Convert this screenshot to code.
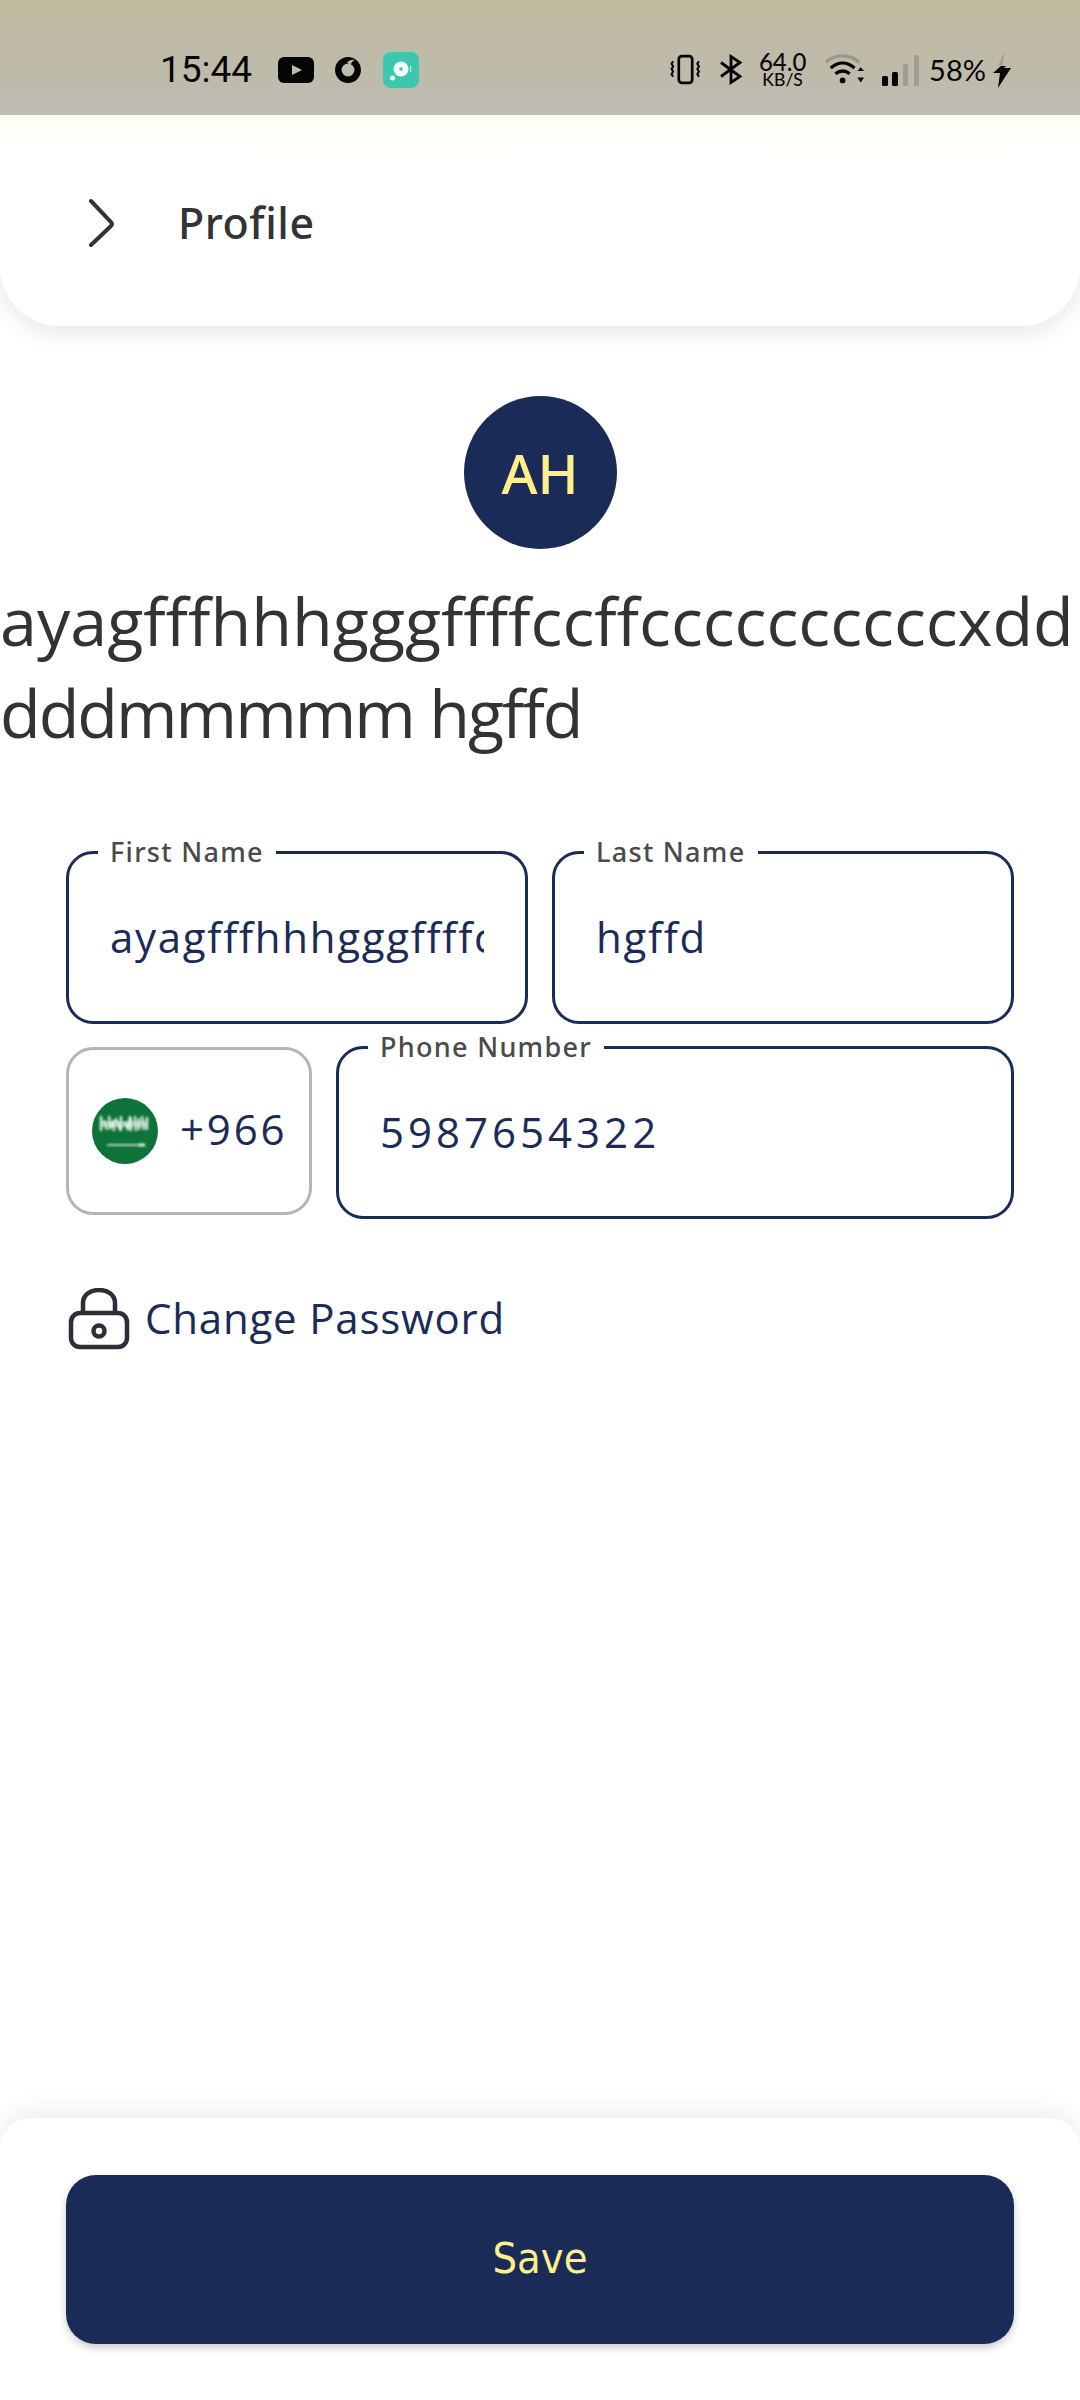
<div class="page">
  <div class="status">
    <div class="status-left">
      <span class="time">15:44</span>
      <svg class="yt" viewBox="0 0 36 26"><rect width="36" height="26" rx="6" fill="#050505"/><path d="M14 8l10 5-10 5z" fill="#c0bca8"/></svg>
      <svg class="voda" viewBox="0 0 26 26"><circle cx="13" cy="13" r="9.700" fill="none" stroke="#050505" stroke-width="6.500"/><path d="M12 6c2-3 6-4 8-2.500-2 0-3.500 1.500-4 4-1.500-1-3-1-4-1.500z" fill="#bdb9a6"/></svg>
      <svg class="app" viewBox="0 0 36 36"><rect width="36" height="36" rx="8" fill="#3cc7ae"/><circle cx="18" cy="17" r="7.500" fill="#f2fbf8"/><circle cx="18" cy="17" r="1.800" fill="#3cc7ae"/><circle cx="9.500" cy="26" r="2.500" fill="#f2fbf8"/><rect x="27" y="14" width="1.200" height="6" fill="#bfeee4"/></svg>
    </div>
    <div class="status-right">
      <svg class="vib" viewBox="0 0 32 30" fill="none" stroke="#050505"><rect x="9.500" y="2" width="13" height="26" rx="3" stroke-width="2.600"/><path d="M4 7l-1.500 2.500L4 12l-1.500 2.500L4 17l-1.500 2.500L4 22M29 7l-1.500 2.500L29 12l-1.500 2.500L29 17l-1.500 2.500L29 22" stroke-width="2"/></svg>
      <svg class="bt" viewBox="0 0 24 30" fill="none" stroke="#050505" stroke-width="2.800"><path d="M2 8l19 14-9 6V2l9 6L2 22"/></svg>
      <div class="speed"><span class="sp-num">64.0</span><span class="sp-unit">KB/S</span></div>
      <svg class="wifi" viewBox="0 0 42 32" fill="none"><path d="M1 8C10-1 26-1 36 8" stroke="#999789" stroke-width="3.500"/><path d="M6 14c8-7 17-7 25 0" stroke="#050505" stroke-width="3.500"/><path d="M11 20c5-4 10-4 15 0" stroke="#050505" stroke-width="3.500"/><circle cx="18.500" cy="27" r="3" fill="#050505"/><path d="M34 17l3.500-4 3.500 4zM34 24l3.500 5 3.500-5z" fill="#050505"/></svg>
      <svg class="signal" viewBox="0 0 38 32"><rect x="1" y="22" width="6" height="10" rx="1.500" fill="#050505"/><rect x="11" y="18" width="6" height="14" rx="1.500" fill="#050505"/><rect x="22" y="10" width="5" height="22" rx="1.500" fill="#a09e90"/><rect x="33" y="1" width="5" height="31" rx="1.500" fill="#a09e90"/></svg>
      <span class="batt">58%</span>
      <svg class="bolt" viewBox="0 0 20 36"><path d="M12 0L6 14h5z" fill="#a5a393"/><path d="M9 14L1 21h7L6 36l13-20h-7l2-2z" fill="#050505"/></svg>
    </div>
  </div>

  <header class="bar">
    <svg class="chev" viewBox="0 0 28 52" fill="none"><path d="M4 3l20 21a3 3 0 0 1 0 4L4 47" stroke="#333" stroke-width="4" stroke-linecap="round"/></svg>
    <h1>Profile</h1>
  </header>

  <main>
    <div class="avatar">AH</div>
    <h2>ayagfffhhhgggffffccffccccccccccxdddddmmmmm hgffd</h2>

    <form>
      <div class="row">
        <fieldset class="field half">
          <legend>First Name</legend>
          <div class="value">ayagfffhhhgggffffccffccccccccccxdddddmmmmm</div>
        </fieldset>
        <fieldset class="field half">
          <legend>Last Name</legend>
          <div class="value">hgffd</div>
        </fieldset>
      </div>
      <div class="row phone">
        <div class="code">
          <svg class="flag" viewBox="0 0 66 66">
            <defs>
              <clipPath id="c"><circle cx="33" cy="33" r="33"/></clipPath>
              <filter id="b" x="-10%" y="-10%" width="120%" height="120%"><feGaussianBlur stdDeviation="0.900"/></filter>
            </defs>
            <g clip-path="url(#c)">
              <rect width="66" height="66" fill="#0e7339"/>
              <g filter="url(#b)" stroke="#e4efe6" stroke-width="2.200" fill="none">
                <path d="M9 18v15M12 22l3 10M17 18l1 13 4-9v11M24 20l4 12M29 18v15M33 24l3 8 2-14M39 20v13M43 18l1 15M47 20v12M50 18l2 14M55 19v13"/>
                <path d="M9 26h46" stroke-width="6" opacity=".6"/>
                <path d="M15 47h35" stroke-width="1.600"/>
                <path d="M47 47h6" stroke-width="3"/>
              </g>
            </g>
          </svg>
          <span class="dial">+966</span>
        </div>
        <fieldset class="field grow">
          <legend>Phone Number</legend>
          <div class="value num">5987654322</div>
        </fieldset>
      </div>
    </form>

    <div class="pw">
      <svg class="lock" viewBox="0 0 62 62" fill="none" stroke="#2b2f38" stroke-width="4.500"><path d="M15 25V15C15 7 22 2 31 2s16 5 16 13v10"/><rect x="3" y="25" width="56" height="34" rx="9"/><circle cx="31" cy="43" r="5.500"/></svg>
      <span class="pw-text">Change Password</span>
    </div>
  </main>

  <footer>
    <button type="button">Save</button>
  </footer>
</div>

<style>
  :global(body) { margin: 0; background: #fff; }
  .page {
    width: 1080px;
    height: 2400px;
    display: flex;
    flex-direction: column;
    overflow: hidden;
    font-family: "Open Sans", "Noto Sans", sans-serif;
    background: #fff;
  }
  .status {
    height: 115px;
    flex: none;
    box-sizing: border-box;
    padding: 0 68px 0 160px;
    display: flex;
    align-items: center;
    justify-content: space-between;
    background: linear-gradient(#c0b99f, #bdbcb2);
    color: #050505;
    position: relative;
    z-index: 3;
  }
  .status-left, .status-right { display: flex; align-items: center; padding-top: 24px; }
  .time { font: 400 37px/40px Roboto, sans-serif; width: 92px; margin-right: 26px; white-space: nowrap; }
  .yt { width: 36px; height: 26px; margin-right: 21px; }
  .voda { width: 26px; height: 26px; margin-right: 22px; }
  .app { width: 36px; height: 36px; }
  .vib { width: 33px; height: 31px; margin-right: 17px; }
  .bt { width: 24px; height: 31px; margin-right: 15px; }
  .speed { display: flex; flex-direction: column; align-items: center; width: 49px; margin-right: 18px; font-family: Lato, sans-serif; color: #0a0a0a; font-weight: 500; }
  .sp-num { font-size: 24px; line-height: 20px; }
  .sp-unit { font-size: 17.500px; line-height: 15px; }
  .wifi { width: 40px; height: 32px; margin-right: 16px; }
  .signal { width: 38px; height: 32px; margin-right: 10px; }
  .batt { font: 29px/32px Lato, sans-serif; margin-right: 6px; }
  .bolt { width: 20px; height: 36px; }

  .bar {
    height: 211px;
    flex: none;
    box-sizing: border-box;
    padding: 4px 0 0 87px;
    display: flex;
    align-items: center;
    gap: 63px;
    border-radius: 0 0 60px 60px;
    background: linear-gradient(#fffdf5 0, #fff 45px);
    box-shadow: 0 6px 24px rgba(0, 0, 0, 0.1);
  }
  .chev { width: 28px; height: 52px; margin-top: 2px; }
  h1 { margin: 0; font-family: "Noto Sans", sans-serif; font-size: 43px; font-weight: 500; color: #333; letter-spacing: 0.5px; }

  main { flex: 1; display: flex; flex-direction: column; }
  .avatar {
    width: 153px;
    height: 153px;
    margin: 70px auto 0;
    border-radius: 50%;
    background: #1b2b58;
    color: #fdf08a;
    font-family: "Noto Sans", sans-serif;
    font-size: 55px;
    font-weight: 500;
    display: flex;
    align-items: center;
    justify-content: center;
  }
  h2 {
    margin: 25px 0 0;
    font-size: 66.500px;
    font-weight: 400;
    line-height: 92px;
    color: #333;
    word-break: break-all;
    letter-spacing: -2px;
  }
  h2::first-line { letter-spacing: 0; }
  form { margin: 79px 66px 0; display: flex; flex-direction: column; gap: 8px; }
  .row { display: flex; gap: 24px; }
  .row.phone { align-items: flex-start; }
  .field {
    margin: 0;
    min-width: 0;
    box-sizing: border-box;
    border: 3px solid #1b2b58;
    border-radius: 27px;
    padding: 0 41px;
    height: 187px;
    display: block;
  }
  .half { flex: 1 1 0; }
  .grow { flex: 1; }
  legend {
    padding: 0 12px;
    margin-left: -12px;
    font-family: "Noto Sans", sans-serif;
    font-size: 27px;
    line-height: 30px;
    color: #4a4a4a;
    letter-spacing: 1.300px;
    font-weight: 500;
  }
  .value {
    font-size: 42px;
    line-height: 60px;
    margin-top: 40px;
    color: #1b2b58;
    letter-spacing: 1.700px;
    white-space: nowrap;
    overflow: hidden;
  }
  .num { letter-spacing: 4px; }
  .code {
    width: 246px;
    height: 168px;
    flex: none;
    margin-top: 15px;
    box-sizing: border-box;
    border: 3px solid #b5b5b5;
    border-radius: 27px;
    display: flex;
    align-items: center;
    padding: 0 0 0 23px;
    gap: 22px;
  }
  .flag { width: 66px; height: 66px; flex: none; }
  .dial { font-size: 42px; color: #1b2b58; letter-spacing: 2.800px; margin-bottom: 6px; }
  .pw { margin: 69px 0 0 68px; display: flex; align-items: center; gap: 15px; font-size: 42px; color: #1b2b58; letter-spacing: 0.8px; }
  .pw-text { margin-bottom: 4px; }
  .lock { width: 62px; height: 62px; }

  footer {
    height: 282px;
    flex: none;
    box-sizing: border-box;
    border-radius: 30px 30px 0 0;
    background: #fff;
    padding: 57px 66px 0;
    box-shadow: 0 -6px 24px rgba(0, 0, 0, 0.08);
  }
  button {
    width: 100%;
    height: 169px;
    border: 0;
    border-radius: 30px;
    background: #1b2b58;
    color: #fdf08a;
    font-family: "DejaVu Sans Condensed", "DejaVu Sans", sans-serif;
    font-size: 43px;
    box-shadow: 0 4px 8px rgba(0, 0, 0, 0.2);
    padding: 0 0 3px;
  }
</style>
